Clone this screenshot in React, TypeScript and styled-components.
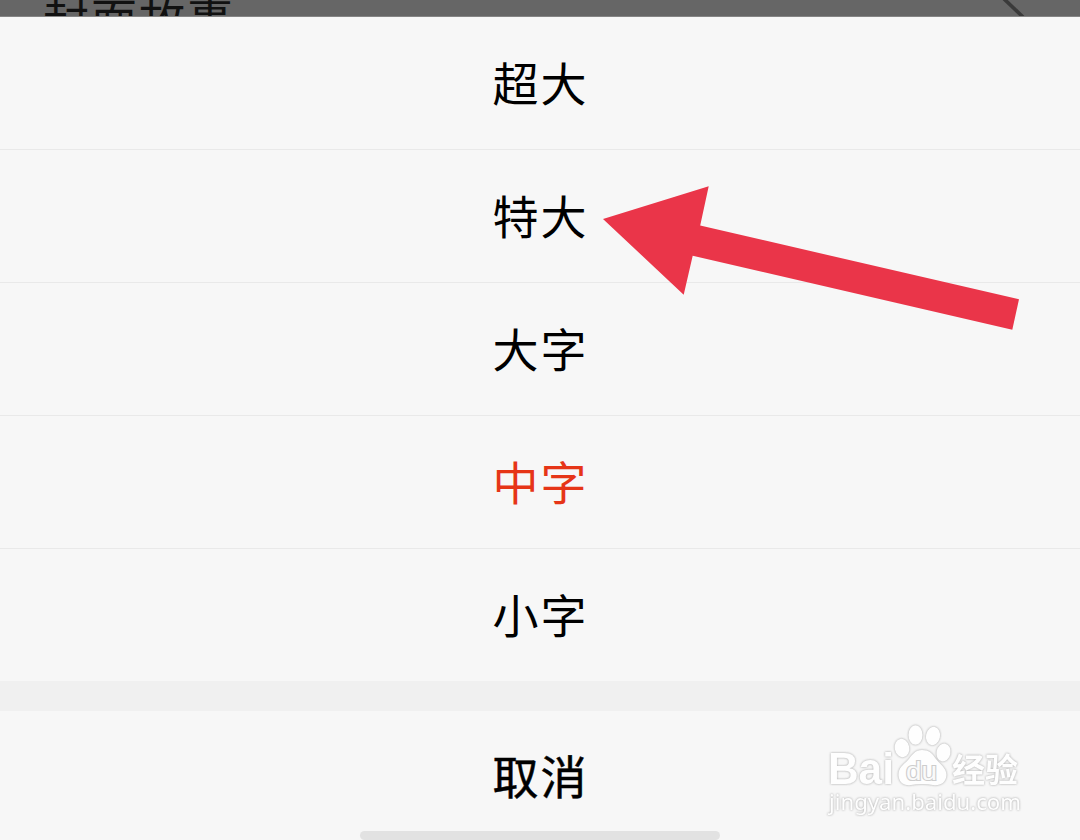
import React from 'react';
import styled, { createGlobalStyle } from 'styled-components';

const GlobalStyle = createGlobalStyle`
  *, *::before, *::after { box-sizing: border-box; }
  html, body { margin: 0; padding: 0; overflow: hidden; }
  body { font-family: "Noto Sans CJK SC", sans-serif; background: #f7f7f7; }
`;

const Screen = styled.main`
  position: relative;
  display: flex;
  flex-direction: column;
  width: 1080px;
  height: 840px;
  overflow: hidden;
  background: #f7f7f7;
`;

const DimmedPage = styled.header`
  display: flex;
  justify-content: space-between;
  align-items: flex-end;
  flex: none;
  height: 17px;
  padding: 0 55px 0 43px;
  overflow: hidden;
  background: #666;
  border-bottom: 1px solid #858585;
`;

const PageTitle = styled.span`
  height: 42px;
  line-height: 42px;
  font-size: 46px;
  letter-spacing: 2px;
  color: #111;
  transform: translateY(21px);
`;

const Chevron = styled.svg`
  display: block;
  flex: none;
`;

const OptionList = styled.div`
  display: flex;
  flex-direction: column;
  flex: none;
`;

const Option = styled.button<{ $selected?: boolean }>`
  display: flex;
  align-items: center;
  justify-content: center;
  height: 133px;
  padding: 0 0 5px 1px;
  border: 0;
  border-bottom: 1px solid #e9e9e9;
  background: #f7f7f7;
  color: ${(p) => (p.$selected ? '#e63517' : '#000')};
  font-family: inherit;
  font-size: 46px;
  line-height: 60px;
  letter-spacing: 2px;

  &:last-child { height: 132px; border-bottom: 0; }
`;

const Divider = styled.div`
  flex: none;
  height: 30px;
  background: #f0f0f0;
`;

const Cancel = styled(Option)`
  flex: none;
  height: 133px;
  border: 0;
  padding: 0 0 7px 1px;
  -webkit-text-stroke: 0.5px #000;
`;

const HomeIndicator = styled.div`
  position: absolute;
  left: 360px;
  bottom: 0;
  width: 360px;
  height: 9px;
  border-radius: 5px;
  background: #e2e2e2;
`;

const Arrow = styled.svg`
  position: absolute;
  left: 590px;
  top: 170px;
`;

const Watermark = styled.svg`
  position: absolute;
  left: 810px;
  top: 710px;

  .mark { filter: drop-shadow(0 0 0.8px #b4b4b4) drop-shadow(0 0 0.6px #dcdcdc); }
`;

const sizes = ['超大', '特大', '大字', '中字', '小字'];

export default function App() {
  return (
    <>
      <GlobalStyle />
      <Screen>
        <DimmedPage>
          <PageTitle>封面故事</PageTitle>
          <Chevron width="24" height="16" viewBox="0 0 24 16">
            <path d="M1 -3L22 17" stroke="#3a3a3a" strokeWidth="3.6" fill="none" />
          </Chevron>
        </DimmedPage>
        <OptionList>
          {sizes.map((label) => (
            <Option key={label} $selected={label === '中字'}>{label}</Option>
          ))}
        </OptionList>
        <Divider />
        <Cancel>取消</Cancel>
        <HomeIndicator />
        <Arrow width="440" height="170" viewBox="0 0 440 170">
          <path d="M13 49L118.7 16.3L110.2 55.5L429 129.3L422.3 159.7L102.7 85.8L93.7 124.7Z" fill="#ea3549" />
        </Arrow>
        <Watermark width="230" height="120" viewBox="0 0 230 120">
          <g className="mark" fill="#fefefe">
            <text x="18" y="74" fontFamily="Liberation Sans" fontWeight="700" fontSize="44" textLength="66" lengthAdjust="spacingAndGlyphs">Bai</text>
            <ellipse cx="92" cy="38" rx="7.3" ry="9.2" transform="rotate(-12 92 38)" />
            <ellipse cx="105.5" cy="25" rx="7" ry="9.8" />
            <ellipse cx="123" cy="26" rx="7" ry="9.2" transform="rotate(12 123 26)" />
            <ellipse cx="133.5" cy="42.5" rx="7" ry="9" transform="rotate(12 133.5 42.5)" />
            <path d="M112 40C105 40 102 45 98 50C93 55 88 58 88.500 66C89.500 74 96 76 101 75C108 73.500 116 73.500 123 75C130 76 136 73 136.500 65C136.500 58 130 54 126 49C122 43 119 40 112 40Z" />
            <text x="142" y="71.500" fontFamily="Noto Sans CJK SC" fontWeight="700" fontSize="33" textLength="66" lengthAdjust="spacingAndGlyphs">经验</text>
            <text x="19" y="100" fontFamily="Noto Sans" fontSize="22" textLength="192" lengthAdjust="spacingAndGlyphs">jingyan.baidu.com</text>
          </g>
          <text x="96" y="69.5" fill="#fafafa" stroke="#cdcdcd" strokeWidth="2.2" paintOrder="stroke" fontFamily="Liberation Sans" fontSize="26" textLength="31" lengthAdjust="spacingAndGlyphs">du</text>
        </Watermark>
      </Screen>
    </>
  );
}
